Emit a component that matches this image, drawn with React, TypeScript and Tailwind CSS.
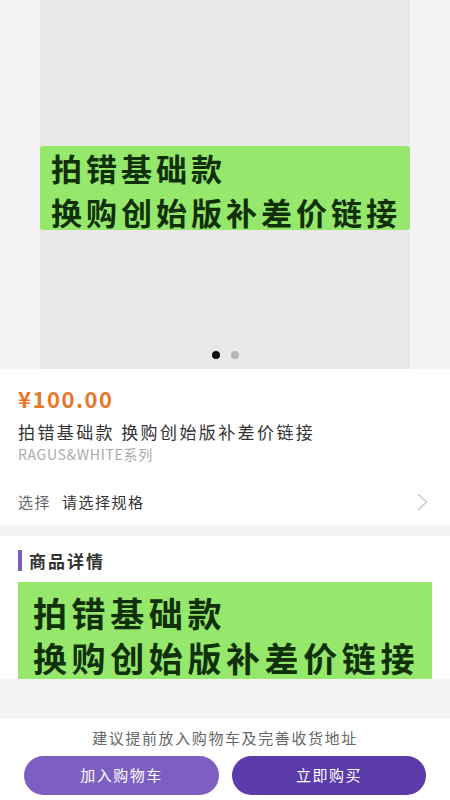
import React from "react";

const cjk = { fontFamily: '"Noto Sans CJK SC", "Noto Sans", sans-serif' };

export default function App() {
  return (
    <div className="w-[450px] min-h-[800px] bg-[#f4f4f4] flex flex-col" style={cjk}>
      {/* swiper */}
      <div className="h-[369px] flex justify-center">
        <div className="relative w-[370px] bg-[#e8e9e8] flex flex-col">
          <div className="mt-[146px] h-[84px] bg-[#95e86b] rounded-[3px] pl-[11px] text-[#10300a] text-[31px] font-bold tracking-[4px] leading-[44px]">
            <div>拍错基础款</div>
            <div className="whitespace-nowrap">换购创始版补差价链接</div>
          </div>
          <div className="absolute left-0 right-0 bottom-[10px] flex justify-center gap-[11px]">
            <span className="w-[8px] h-[8px] rounded-full bg-[#111]" />
            <span className="w-[8px] h-[8px] rounded-full bg-[#b5b5b5]" />
          </div>
        </div>
      </div>

      {/* info */}
      <div className="bg-white pl-[18px] pr-[22px] pt-[15px] pb-[13px]">
        <div className="text-[22px] leading-[28px] font-bold text-[#e8762b] tracking-[1.5px]">¥100.00</div>
        <div className="mt-[8px] text-[17px] leading-[24px] text-[#333] tracking-[2.4px] whitespace-nowrap">
          拍错基础款 换购创始版补差价链接
        </div>
        <div className="mt-[1px] text-[14px] leading-[18px] text-[#aaa] tracking-[0.7px]">RAGUS&amp;WHITE系列</div>
        <div className="mt-[29px] flex items-center justify-between h-[20px]">
          <div className="flex items-center text-[15px] tracking-[1.5px]">
            <span className="text-[#666]">选择</span>
            <span className="ml-[11px] text-[#333]">请选择规格</span>
          </div>
          <svg width="11" height="18" viewBox="0 0 11 18" fill="none">
            <path d="M1.5 1.5 L9.5 9 L1.5 16.5" stroke="#c8c8c8" strokeWidth="1.5" strokeLinecap="round" strokeLinejoin="round" />
          </svg>
        </div>
      </div>

      {/* detail */}
      <div className="mt-[11px] bg-white pt-[14px]">
        <div className="flex items-center pl-[18px] h-[21px]">
          <span className="w-[4px] h-[21px] bg-[#7b5cbf]" />
          <span className="ml-[7px] text-[17px] font-bold text-[#333] tracking-[2px] leading-[21px]">商品详情</span>
        </div>
        <div className="mx-[18px] mt-[11px] bg-[#95e86b] pl-[15px] pt-[8px] text-[#10300a] text-[34px] font-bold tracking-[4.6px]">
          <div className="leading-[46px]">拍错基础款</div>
          <div className="leading-[43px] whitespace-nowrap">换购创始版补差价链接</div>
        </div>
      </div>

      <div className="h-[40px]" />

      {/* bottom bar */}
      <div className="bg-white h-[81px] flex flex-col items-center">
        <div className="mt-[9px] text-[15px] leading-[20px] text-[#666] tracking-[1.6px]">建议提前放入购物车及完善收货地址</div>
        <div className="mt-[8px] w-full flex px-[24px] gap-[13px]">
          <button className="w-[195px] h-[39px] rounded-full bg-[#7d5fc1] text-white text-[15px] tracking-[1.5px]">加入购物车</button>
          <button className="w-[194px] h-[39px] rounded-full bg-[#5a3ba9] text-white text-[15px] tracking-[1.5px]">立即购买</button>
        </div>
      </div>
    </div>
  );
}
